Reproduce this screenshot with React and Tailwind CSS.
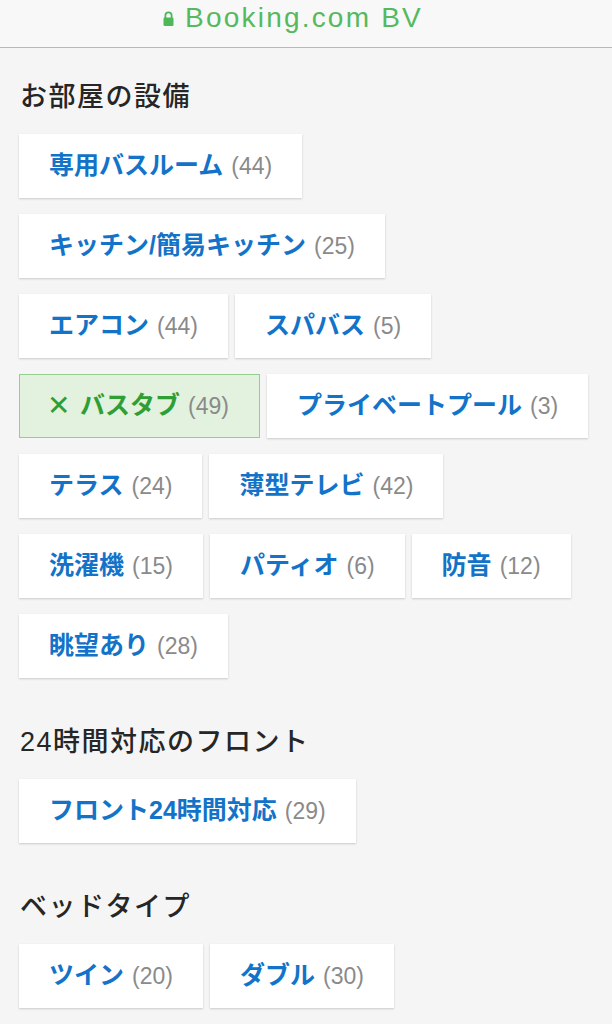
import React from 'react';

const FONT = { fontFamily: '"Liberation Sans", "Noto Sans CJK JP", sans-serif' };

const sections = [
  {
    title: 'お部屋の設備',
    rows: [
      [{ label: '専用バスルーム', count: 44 }],
      [{ label: 'キッチン/簡易キッチン', count: 25 }],
      [{ label: 'エアコン', count: 44 }, { label: 'スパバス', count: 5 }],
      [{ label: 'バスタブ', count: 49, active: true }, { label: 'プライベートプール', count: 3 }],
      [{ label: 'テラス', count: 24 }, { label: '薄型テレビ', count: 42 }],
      [{ label: '洗濯機', count: 15 }, { label: 'パティオ', count: 6 }, { label: '防音', count: 12 }],
      [{ label: '眺望あり', count: 28 }],
    ],
  },
  {
    title: '24時間対応のフロント',
    rows: [[{ label: 'フロント24時間対応', count: 29 }]],
  },
  {
    title: 'ベッドタイプ',
    rows: [[{ label: 'ツイン', count: 20 }, { label: 'ダブル', count: 30 }]],
  },
];

const Chip = ({ label, count, active }) => (
  <div
    className={`h-16 flex items-center px-[30px] whitespace-nowrap ${
      active
        ? 'bg-[#e2f2df] border border-[#93cf8e] text-[#2f9e33]'
        : 'bg-white text-[#1273c8] shadow-[0_1px_2px_rgba(0,0,0,0.18)]'
    }`}
  >
    {active && <span className="text-[28px] font-normal mr-[10px] -ml-[3px] leading-none">✕</span>}
    <span className="text-[25px] font-bold">{label}</span>
    <span className="text-[23px] text-[#8a8a8a] ml-[8px]">({count})</span>
  </div>
);

const App = () => (
  <div className="w-[612px] min-h-[1024px] bg-[#f5f5f5] overflow-hidden" style={FONT}>
    <div className="h-[48px] bg-[#f8f8f8] border-b border-[#b9b9b9] flex items-center justify-center gap-[11px] pb-[11px] pr-[26px]">
      <svg width="11" height="15" viewBox="0 0 11 15">
        <path d="M2.4 7V4.4a3.1 3.1 0 0 1 6.2 0V7" fill="none" stroke="#4eb75a" strokeWidth="1.8" />
        <rect x="0.5" y="6.5" width="10" height="8.5" rx="1.3" fill="#4eb75a" />
      </svg>
      <span className="text-[28px] text-[#55b95e] tracking-[2.2px] leading-none">Booking.com BV</span>
    </div>

    <div className="pl-[19px] pr-[19px]">
      {sections.map((section, i) => (
        <div key={section.title} className={i === 0 ? 'pt-[32px]' : 'pt-[47px]'}>
          <h2 className="pl-[1px] text-[27px] font-medium text-[#262626] leading-[34px] tracking-[1.5px] mb-[20px]">
            {section.title}
          </h2>
          <div className="flex flex-col gap-4">
            {section.rows.map((row, r) => (
              <div key={r} className="flex gap-[7px]">
                {row.map((chip) => (
                  <Chip key={chip.label} {...chip} />
                ))}
              </div>
            ))}
          </div>
        </div>
      ))}
    </div>
  </div>
);

export default App;
